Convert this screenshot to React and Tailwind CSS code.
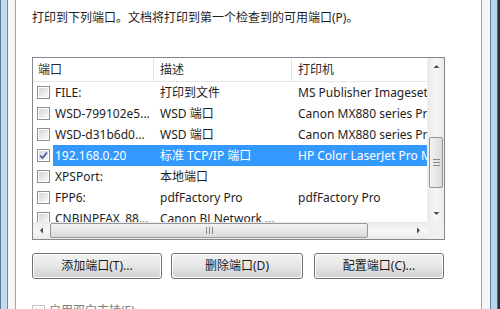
import React from 'react';

const ports = [
  { name: 'FILE:', desc: '打印到文件', printer: 'MS Publisher Imagesetter' },
  { name: 'WSD-799102e5...', desc: 'WSD 端口', printer: 'Canon MX880 series Printer' },
  { name: 'WSD-d31b6d0...', desc: 'WSD 端口', printer: 'Canon MX880 series Printer' },
  { name: '192.168.0.20', desc: '标准 TCP/IP 端口', printer: 'HP Color LaserJet Pro MFP', checked: true, selected: true },
  { name: 'XPSPort:', desc: '本地端口', printer: '' },
  { name: 'FPP6:', desc: 'pdfFactory Pro', printer: 'pdfFactory Pro' },
  { name: 'CNBJNPFAX_88...', desc: 'Canon BJ Network ...', printer: '' },
];

const CheckBox = ({ checked, disabled }) => (
  <div
    className={
      'w-[13px] h-[13px] shrink-0 border p-px ' +
      (disabled ? 'border-[#c4c4c4] bg-white' : 'border-[#8e8f8f] bg-white')
    }
  >
    <div
      className={
        'w-full h-full flex items-center justify-center ' +
        (disabled ? 'bg-[#f4f4f4]' : 'bg-gradient-to-br from-[#d6d6d6] to-[#f9f9f9]')
      }
    >
      {checked && (
        <svg width="9" height="9" viewBox="0 0 9 9">
          <path d="M1 4.5 L3.5 7 L8 1.5" fill="none" stroke="#3b52a0" strokeWidth="1.6" />
        </svg>
      )}
    </div>
  </div>
);

const Arrow = ({ dir }) => {
  const paths = {
    up: 'M0.5 4 L3.5 1 L6.5 4 Z',
    down: 'M0.5 1 L3.5 4 L6.5 1 Z',
    left: 'M4 0.5 L1 3.5 L4 6.5 Z',
    right: 'M1 0.5 L4 3.5 L1 6.5 Z',
  };
  const vertical = dir === 'up' || dir === 'down';
  return (
    <svg width={vertical ? 7 : 5} height={vertical ? 5 : 7} viewBox={vertical ? '0 0 7 5' : '0 0 5 7'}>
      <path d={paths[dir]} fill="#4d4d4d" />
    </svg>
  );
};

const WinButton = ({ children, className }) => (
  <div
    className={
      'h-[26px] rounded-[3px] border border-[#707070] p-px ' + className
    }
  >
    <div className="h-full rounded-[2px] bg-gradient-to-b from-[#f2f2f2] via-[#e6e6e6] to-[#d2d2d2] flex items-center justify-center text-[12px] text-[#1a1a1a]">
      {children}
    </div>
  </div>
);

export default function App() {
  return (
    <div className="w-[500px] h-[309px] overflow-hidden flex bg-white font-['Noto_Sans','Noto_Sans_CJK_SC',sans-serif] text-[12px] text-[#1e1e1e]">
      {/* left window frame */}
      <div className="flex h-full shrink-0">
        <div className="w-px bg-[#5b7896]" />
        <div className="w-[6px] bg-[#c3daef]" />
        <div className="w-px bg-[#6f8aa6]" />
        <div className="w-[7px] bg-[#f6f6f6]" />
        <div className="w-px bg-[#a3a3a3]" />
      </div>

      {/* tab page */}
      <div className="w-[465px] h-full bg-white pl-[16px] pt-[10px] flex flex-col">
        <div className="h-[16px] leading-[16px] whitespace-nowrap">
          打印到下列端口。文档将打印到第一个检查到的可用端口(P)。
        </div>

        {/* list view */}
        <div className="mt-[31px] w-[413px] h-[183px] border border-[#828790] flex flex-col shrink-0">
          <div className="flex h-[164px]">
            <div className="w-[394px] overflow-hidden">
              <div className="flex h-[24px] border-b border-[#e5e5e5] items-center text-[#2a2a2a] whitespace-nowrap">
                <div className="w-[121px] pl-[5px] h-full flex items-center border-r border-[#e3e3e3]">端口</div>
                <div className="w-[138px] pl-[6px] h-full flex items-center border-r border-[#e3e3e3]">描述</div>
                <div className="flex-1 pl-[6px]">打印机</div>
              </div>
              {ports.map((p) => (
                <div key={p.name} className="flex h-[21px] items-center whitespace-nowrap">
                  <div className="w-[20px] pl-[4px] shrink-0">
                    <CheckBox checked={p.checked} />
                  </div>
                  <div
                    className={
                      'flex h-full items-center flex-1 ' +
                      (p.selected ? 'bg-[#3399ff] text-white' : '')
                    }
                  >
                    <div className="w-[101px] pl-[2px] shrink-0 overflow-hidden">{p.name}</div>
                    <div className="w-[138px] pl-[6px] shrink-0 overflow-hidden">{p.desc}</div>
                    <div className="flex-1 pl-[6px] overflow-hidden">{p.printer}</div>
                  </div>
                </div>
              ))}
            </div>

            {/* vertical scrollbar */}
            <div className="w-[17px] h-full flex flex-col bg-gradient-to-r from-[#eaeaea] via-[#f6f6f6] to-[#eaeaea] border-l border-[#eeeeee]">
              <div className="h-[17px] flex items-center justify-center">
                <Arrow dir="up" />
              </div>
              <div className="flex-1">
                <div className="mt-[62px] mx-px h-[51px] rounded-[2px] border border-[#979797] bg-gradient-to-r from-[#f3f3f3] via-[#e8e8e8] to-[#d9d9d9] flex flex-col items-center justify-center gap-[2px]">
                  <div className="w-[7px] h-px bg-[#8a8a8a]" />
                  <div className="w-[7px] h-px bg-[#8a8a8a]" />
                  <div className="w-[7px] h-px bg-[#8a8a8a]" />
                </div>
              </div>
              <div className="h-[17px] flex items-center justify-center">
                <Arrow dir="down" />
              </div>
            </div>
          </div>

          {/* horizontal scrollbar */}
          <div className="flex h-[17px]">
            <div className="w-[394px] flex bg-gradient-to-b from-[#eaeaea] via-[#f6f6f6] to-[#eaeaea]">
              <div className="w-[17px] flex items-center justify-center">
                <Arrow dir="left" />
              </div>
              <div className="flex-1 py-px">
                <div className="w-[318px] h-full rounded-[2px] border border-[#979797] bg-gradient-to-b from-[#f3f3f3] via-[#e8e8e8] to-[#d9d9d9] flex items-center justify-center gap-[2px]">
                  <div className="w-px h-[7px] bg-[#8a8a8a]" />
                  <div className="w-px h-[7px] bg-[#8a8a8a]" />
                  <div className="w-px h-[7px] bg-[#8a8a8a]" />
                </div>
              </div>
              <div className="w-[17px] flex items-center justify-center">
                <Arrow dir="right" />
              </div>
            </div>
            <div className="flex-1 bg-[#f0f0f0]" />
          </div>
        </div>

        {/* buttons */}
        <div className="mt-[13px] flex">
          <WinButton className="w-[130px]">添加端口(T)...</WinButton>
          <WinButton className="w-[132px] ml-[9px]">删除端口(D)</WinButton>
          <WinButton className="w-[130px] ml-[11px]">配置端口(C)...</WinButton>
        </div>

        <div className="mt-[23px] flex items-center gap-[4px] text-[#7a7a7a] whitespace-nowrap">
          <CheckBox disabled />
          <span>启用双向支持(E)</span>
        </div>
      </div>

      {/* right window frame */}
      <div className="flex h-full flex-1">
        <div className="w-px bg-[#a3a3a3]" />
        <div className="w-[8px] bg-[#f6f6f6]" />
        <div className="w-px bg-[#5f7e9c]" />
        <div className="w-[6px] bg-[#b9d5ee]" />
        <div className="w-px bg-[#4a6a8a]" />
        <div className="flex-1 bg-[#2e2e2e]" />
      </div>
    </div>
  );
}
